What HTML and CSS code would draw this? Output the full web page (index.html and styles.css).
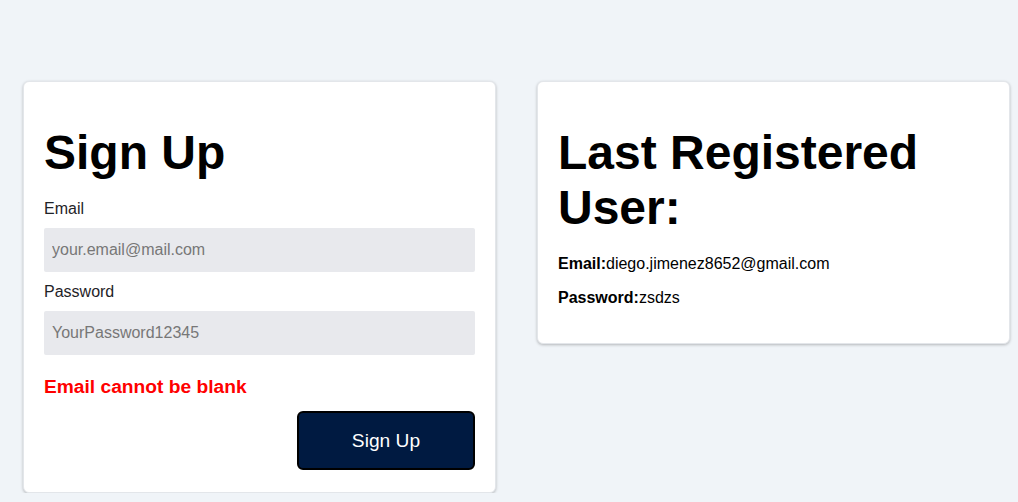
FILE: index.html
```html
<!DOCTYPE html>
<html lang="en">
<head>
<meta charset="utf-8">
<title>Sign Up</title>
<link rel="stylesheet" href="styles.css">
</head>
<body>
<main class="page">
  <section class="card">
    <h1 class="title">Sign Up</h1>
    <form class="form">
      <label class="label" for="email">Email</label>
      <input class="input" id="email" type="text" placeholder="your.email@mail.com">
      <label class="label" for="password">Password</label>
      <input class="input" id="password" type="password" placeholder="YourPassword12345">
      <p class="error">Email cannot be blank</p>
      <div class="actions">
        <button class="button" type="button">Sign Up</button>
      </div>
    </form>
  </section>
  <section class="card card-user">
    <h1 class="title">Last Registered User:</h1>
    <p class="info"><strong>Email:</strong>diego.jimenez8652@gmail.com</p>
    <p class="info"><strong>Password:</strong>zsdzs</p>
  </section>
</main>
</body>
</html>
```

FILE: styles.css
```css
html, body {
  margin: 0;
  padding: 0;
  background: #f0f4f8;
  font-family: "Liberation Sans", Arial, sans-serif;
}
.page {
  display: flex;
  align-items: flex-start;
  gap: 41px;
  padding: 81px 8px 0 23px;
}
.card {
  box-sizing: border-box;
  width: 473px;
  background: #ffffff;
  border: 1px solid #e3e6ea;
  border-radius: 6px;
  box-shadow: 0 1px 3px rgba(0, 0, 0, 0.25);
  padding: 20px 20px 21px;
}
.card-user {
  padding-bottom: 20px;
}
.title {
  font-size: 48px;
  font-weight: bold;
  color: #000;
  margin: 23px 0 19px;
  line-height: 55px;
}
.card-user .title {
  margin-bottom: 20px;
}
.form {
  display: flex;
  flex-direction: column;
}
.label {
  font-size: 16px;
  color: #1f2328;
  line-height: 18px;
  margin: 1px 0 10px;
}
.input {
  box-sizing: border-box;
  height: 44px;
  width: 100%;
  border: none;
  border-radius: 2px;
  background: #e8e9ed;
  padding: 0 8px;
  font-family: "Liberation Sans", Arial, sans-serif;
  font-size: 16px;
  color: #333;
  margin: 0 0 10px;
}
.input::placeholder {
  color: #777777;
}
.error {
  color: #ff0000;
  font-weight: bold;
  font-size: 19.2px;
  line-height: 22px;
  margin: 11px 0 13px;
}
.actions {
  display: flex;
  justify-content: flex-end;
}
.button {
  width: 178px;
  height: 59px;
  background: #001a41;
  color: #ffffff;
  border: 2px solid #000000;
  border-radius: 6px;
  font-family: "Liberation Sans", Arial, sans-serif;
  font-size: 19.2px;
  margin-bottom: 1px;
}
.info {
  font-size: 16px;
  margin: 16px 0;
  color: #000;
}
.info strong {
  font-weight: bold;
}
```
